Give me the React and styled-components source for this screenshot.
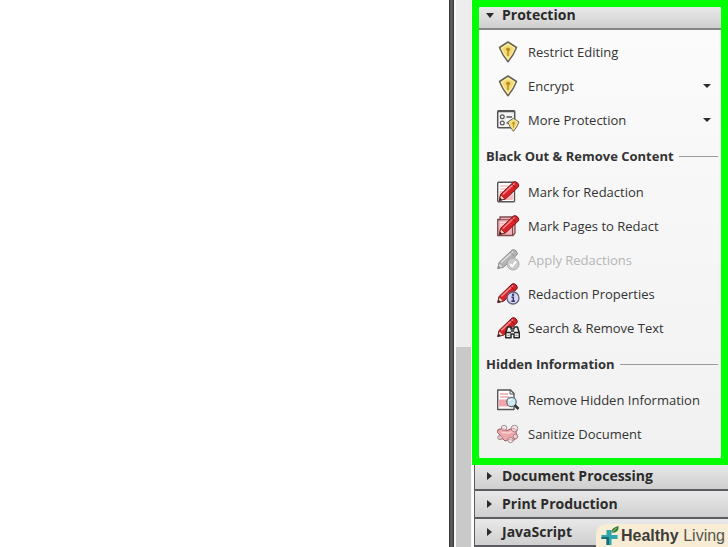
import React, { Fragment } from 'react';
import styled, { createGlobalStyle } from 'styled-components';

const GlobalStyle = createGlobalStyle`
    * {
        box-sizing: border-box;
    }

    body {
        margin: 0;
        background: #fff;
        font-family: "Open Sans", "Noto Sans", sans-serif;
        color: #333;
    }

    button {
        font-family: inherit;
        border: none;
        margin: 0;
        text-align: left;
        cursor: pointer;
    }
`;

const Window = styled.div`
    display: flex;
    height: 100vh;
    overflow: hidden;
`;

const Page = styled.main`
    flex: 1;
    background: #fff;
`;

const Divider = styled.div`
    width: 5px;
    background: #58585a;
    border-left: 1px solid #3a3a3c;
    border-right: 1px solid #3a3a3c;
`;

const Scrollbar = styled.div`
    width: 18px;
    padding: 0 1px 0 2px;
    display: flex;
    flex-direction: column;
    background: #f8f8f8;
`;

const Track = styled.div`
    flex: 347;
    background: #ededed;
`;

const Thumb = styled.div`
    flex: 200;
    background: #c9c9c9;
`;

const Tools = styled.aside`
    width: 256px;
    display: flex;
    flex-direction: column;
`;

const Highlight = styled.section`
    position: relative;
    z-index: 1;
    margin-bottom: -2px;
    border: 7px solid #00ff00;
`;

const PanelHeader = styled.button`
    display: flex;
    align-items: center;
    gap: 8px;
    width: 100%;
    height: ${props => props.$open ? '23px' : '28px'};
    padding: ${props => props.$open ? '0 7px 5px' : '0 11px'};
    background: linear-gradient(#e9e9e9, #cfcfcf);
    font-size: 14px;
    line-height: 18px;
    font-weight: 700;
    color: #2b2b2b;
    && {
        border-bottom: 2px solid ${props => props.$open ? '#858585' : '#5c5c60'};
    }
`;

const PanelBody = styled.div`
    padding: 5px 3px 7px 7px;
    background: linear-gradient(#fbfbfb, #f1f1f1);
`;

const GroupTitle = styled.h3`
    display: flex;
    align-items: center;
    gap: 5px;
    height: 38px;
    margin: 0;
    font-size: 13px;
    line-height: 18px;
    font-weight: 700;
    white-space: nowrap;
    color: #333;

    &::after {
        content: "";
        flex: 1;
        height: 1px;
        background: #9b9b9b;
    }
`;

const Tool = styled.button`
    display: flex;
    align-items: center;
    gap: 8px;
    width: 100%;
    height: 34px;
    padding: 0 7px 0 10px;
    background: none;
    font-size: 13px;
    line-height: 18px;
    white-space: nowrap;
    color: #333;

    &:disabled {
        color: #b5b5b5;
        cursor: default;
    }
`;

const ToolIcon = styled.svg`
    width: 24px;
    height: 24px;
    flex: none;
`;

const Label = styled.span`
    flex: 1;
`;

const Caret = styled.svg`
    width: 8px;
    height: 8px;
    flex: none;
    fill: #2b2b2b;
`;

const ClosedPanels = styled.div`
    margin-left: 2px;
    border-left: 1px solid #5c5c60;
`;

const Brand = styled.a`
    position: absolute;
    z-index: 2;
    right: 0;
    bottom: 0;
    display: flex;
    align-items: center;
    gap: 1px;
    height: 23px;
    padding: 0 3px 0 4px;
    border-radius: 10px 0 0 0;
    background: #f8ecd4;
    font-family: "Liberation Sans", Arial, sans-serif;
    font-size: 16px;
    line-height: 20px;
    white-space: nowrap;
    text-decoration: none;
    color: #55554f;

    b {
        color: #3d3d3a;
    }
`;

const BrandIcon = styled.svg`
    width: 20px;
    height: 22px;
`;

const Shield = () => (
    <Fragment>
        <path d="M12 2 L20.500 7.500 Q17.500 15.500 12 21.700 Q6.500 15.500 3.500 7.500 Z" fill="#f0d873" stroke="#65625a" strokeWidth="1.500" strokeLinejoin="round" />
        <path d="M12 4 L18.500 8.300 Q16 14.500 12 19 Q8 14.500 5.500 8.300 Z" fill="none" stroke="#fbee9e" strokeWidth="1.200" />
        <path d="M10.500 8 Q14 7 14.200 9.500 Q14 11 12.700 11.500 V16 H11.300 V11 Q9.500 10 10.500 8Z" fill="#b98a20" />
    </Fragment>
);

const Pencil = ({ body = '#dc2229', shine = '#f58d8d', line = '#7c1519', tip = '#f8d9c4', lead = '#222' }) => (
    <g strokeLinejoin="round">
        <path d="M4.500 14.500 L17.500 2 Q19.300 .9 21.700 3 Q23.600 5.300 22.300 7 L9.300 19 L3.300 20.600 Z" fill={body} stroke={line} strokeWidth="1" />
        <path d="M4.800 15 L8.800 18.800 L3.300 20.500 Z" fill={tip} stroke={line} strokeWidth="0.700" />
        <path d="M4.200 17.800 L6 19.600 L3 20.700 Z" fill={lead} />
        <path d="M6.800 14.500 L18.500 3.500" stroke={shine} strokeWidth="1.500" />
        <path d="M15.800 4 L20 8.300" stroke={line} strokeWidth="0.900" />
    </g>
);

const icons = {
    shield: <Shield />,
    more: (
        <Fragment>
            <rect x="1.700" y="2.700" width="17" height="17" rx="1" fill="#f4f4f4" stroke="#555" strokeWidth="1.500" />
            <path d="M2 3.500 H18.500" stroke="#555" strokeWidth="1.500" />
            <circle cx="6.300" cy="8.800" r="1.900" fill="#fff" stroke="#555" strokeWidth="1.200" />
            <circle cx="6.300" cy="15" r="1.900" fill="#fff" stroke="#555" strokeWidth="1.200" />
            <path d="M10.500 9 H16 M10.500 15 H13" stroke="#555" strokeWidth="1.600" />
            <g transform="translate(9.500 9) scale(.66)"><Shield /></g>
        </Fragment>
    ),
    mark: (
        <Fragment>
            <rect x="1.700" y="2.200" width="16.800" height="19.500" rx="1" fill="#fff" stroke="#555" strokeWidth="1.400" />
            <path d="M4 6 H12 M4 9 H10" stroke="#eba7ac" strokeWidth="1.200" />
            <path d="M3.500 11 H16.800 V20 H3.500 Z" fill="#f6b9bd" />
            <Pencil />
        </Fragment>
    ),
    pages: (
        <Fragment>
            <path d="M4 3 H19 V19 L17 21.500 H1.700 V5.500 H4 Z" fill="#f3b3b8" stroke="#7c4b4e" strokeWidth="1.300" />
            <path d="M2 5.700 H16.500 V21" fill="none" stroke="#7c4b4e" />
            <path d="M4 8.500 H11 M4 11 H9" stroke="#fbe1e2" />
            <Pencil />
        </Fragment>
    ),
    apply: (
        <Fragment>
            <g transform="translate(-1.500 0)"><Pencil body="#b4b4b4" shine="#dedede" line="#8e8e8e" tip="#e5e5e5" lead="#888" /></g>
            <circle cx="17" cy="16" r="6" fill="#cbcbcb" stroke="#aaa" />
            <path d="M14 16 L16.300 18.300 L20 13.300" fill="none" stroke="#fff" strokeWidth="2" />
        </Fragment>
    ),
    properties: (
        <Fragment>
            <g transform="translate(-1.500 0)"><Pencil /></g>
            <circle cx="17" cy="16" r="6" fill="#d6d6f1" stroke="#62627e" strokeWidth="1.300" />
            <circle cx="17" cy="12.800" r="1.200" fill="#36366a" />
            <path d="M15.500 15.200 H17.300 V19 M15.300 19.300 H19" fill="none" stroke="#36366a" strokeWidth="1.500" />
        </Fragment>
    ),
    search: (
        <Fragment>
            <g transform="translate(-1.500 0)"><Pencil /></g>
            <path d="M11.500 11 H15 V13 H18 V11 H21.500 L23.300 17 V21.700 H18 V18 H15 V21.700 H9.700 V17 Z" fill="#eee" stroke="#262626" strokeWidth="1.500" strokeLinejoin="round" />
            <path d="M10 16.500 H15 M18 16.500 H23 M15 15 H18" stroke="#262626" strokeWidth="1.600" />
            <path d="M11.500 19.300 H13.500 M19.500 19.300 H21.500" stroke="#777" />
        </Fragment>
    ),
    hidden: (
        <Fragment>
            <path d="M1.700 2 H14.500 L18 5.500 V21.500 H1.700 Z" fill="#fff" stroke="#555" strokeWidth="1.400" strokeLinejoin="round" />
            <path d="M14 2 V6 H18" fill="none" stroke="#555" />
            <path d="M4 6 H12 M4 9 H13" stroke="#eba7ac" strokeWidth="1.300" />
            <path d="M3 11.500 H12 V18.500 H3 Z" fill="#f2a5aa" />
            <circle cx="15.500" cy="14" r="4.700" fill="#cdeaf2" stroke="#62707a" strokeWidth="1.300" />
            <path d="M13 13 Q13.500 11.500 15.500 11.300" fill="none" stroke="#fff" strokeWidth="1.300" />
            <path d="M18.800 17.200 L22.500 21" stroke="#333" strokeWidth="2.600" />
        </Fragment>
    ),
    sanitize: (
        <Fragment>
            <path d="M2 7.500 L7 6.500 L11 8.500 L17 6 L21 8 L20 11 L21.500 15 L17.500 18.500 L13 17.500 L9 19 L7 17 L3 16 L3.500 12.500 L1.500 10.500 Z" fill="#f0a7ac" stroke="#a35a60" strokeLinejoin="round" />
            <path d="M5.500 10.500 L12 11 L17 9.500" fill="none" stroke="#f9d3d4" strokeWidth="1.500" />
            <g fill="#fae3e3" fillOpacity=".6" stroke="#9b8587" strokeWidth=".9">
                <circle cx="8" cy="6" r="2.700" />
                <circle cx="18.500" cy="6.500" r="3.300" />
                <circle cx="4" cy="15.500" r="2.200" />
                <circle cx="14.500" cy="18" r="2.700" />
                <circle cx="19.500" cy="14.500" r="2.300" />
            </g>
        </Fragment>
    ),
};

const groups = [
    {
        tools: [
            { icon: 'shield', label: 'Restrict Editing' },
            { icon: 'shield', label: 'Encrypt', menu: true },
            { icon: 'more', label: 'More Protection', menu: true },
        ],
    },
    {
        title: 'Black Out & Remove Content',
        tools: [
            { icon: 'mark', label: 'Mark for Redaction' },
            { icon: 'pages', label: 'Mark Pages to Redact' },
            { icon: 'apply', label: 'Apply Redactions', disabled: true },
            { icon: 'properties', label: 'Redaction Properties' },
            { icon: 'search', label: 'Search & Remove Text' },
        ],
    },
    {
        title: 'Hidden Information',
        tools: [
            { icon: 'hidden', label: 'Remove Hidden Information' },
            { icon: 'sanitize', label: 'Sanitize Document' },
        ],
    },
];

const closedPanels = ['Document Processing', 'Print Production', 'JavaScript'];

const App = () => {
    return (
        <Fragment>
            <GlobalStyle />
            <Window>
                <Page />
                <Divider />
                <Scrollbar>
                    <Track />
                    <Thumb />
                </Scrollbar>
                <Tools>
                    <Highlight>
                        <PanelHeader type="button" $open aria-expanded="true">
                            <Caret viewBox="0 0 8 8"><path d="M0 2 H8 L4 7 Z" /></Caret>
                            Protection
                        </PanelHeader>
                        <PanelBody>
                            {groups.map((group, i) => (
                                <Fragment key={i}>
                                    {group.title && <GroupTitle>{group.title}</GroupTitle>}
                                    {group.tools.map(tool => (
                                        <Tool key={tool.label} type="button" disabled={tool.disabled}>
                                            <ToolIcon viewBox="0 0 24 24">{icons[tool.icon]}</ToolIcon>
                                            <Label>{tool.label}</Label>
                                            {tool.menu && <Caret viewBox="0 0 8 8"><path d="M0 2 H8 L4 6 Z" /></Caret>}
                                        </Tool>
                                    ))}
                                </Fragment>
                            ))}
                        </PanelBody>
                    </Highlight>
                    <ClosedPanels>
                        {closedPanels.map(name => (
                            <PanelHeader key={name} type="button" aria-expanded="false">
                                <Caret viewBox="0 0 8 8"><path d="M1 0 L6 4 L1 8 Z" /></Caret>
                                {name}
                            </PanelHeader>
                        ))}
                    </ClosedPanels>
                </Tools>
            </Window>
            <Brand href="#">
                <BrandIcon viewBox="0 0 19 22">
                    <path d="M6 5 H11 V10 H17 V14 H11 V20 H6 V14 H1 V10 H6 Z" fill="#2ba5ae" />
                    <path d="M1 12 H8.500 V20 H6 V14 H1 Z" fill="#1c6a78" />
                    <path d="M11 8 Q10 3 18 1 Q19 8 11 8 Z" fill="#2f7a35" />
                    <path d="M11 8 L16 3" stroke="#d5e6b0" strokeWidth=".8" />
                </BrandIcon>
                <span><b>Healthy</b> Living</span>
            </Brand>
        </Fragment>
    );
};

export default App;
